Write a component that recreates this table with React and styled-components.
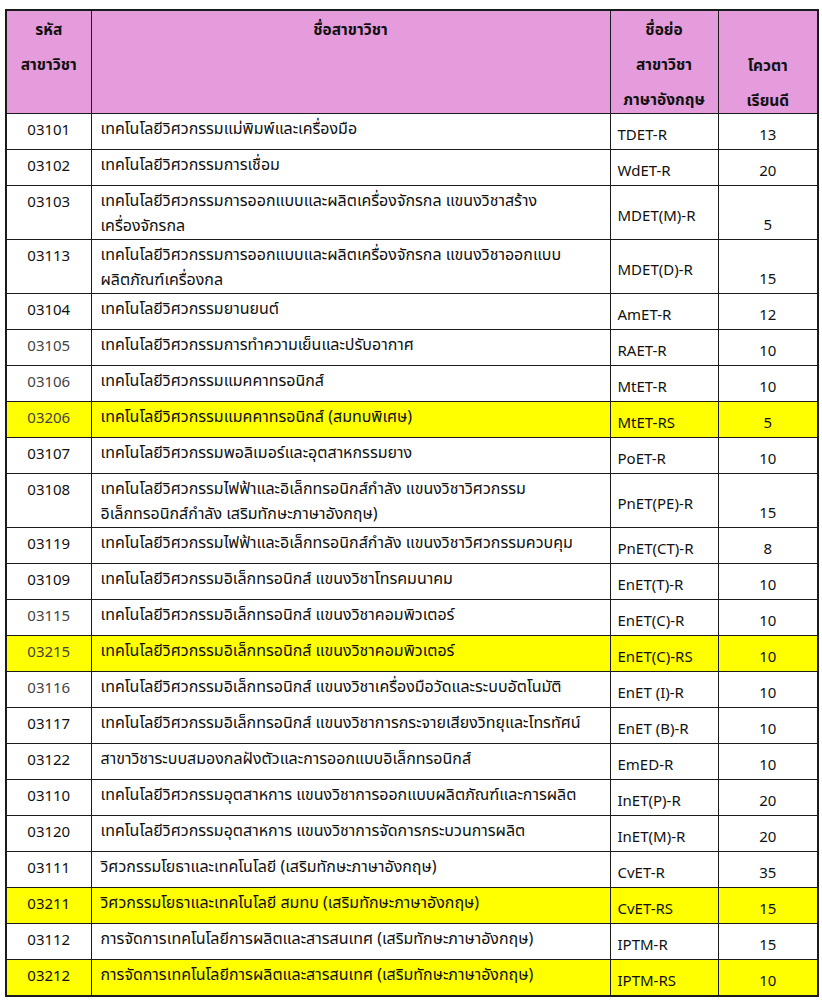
import styled, { createGlobalStyle } from 'styled-components';

const Global = createGlobalStyle`
    body {
        margin: 0;
        background: #fff;
        font-family: Tahoma, "Noto Sans Thai", "Noto Sans", "DejaVu Sans", sans-serif;
        color: #111;
    }
`

const Page = styled.div`
    padding: 9px 0 0 5px;
`

const Table = styled.table`
    border-collapse: collapse;
    table-layout: fixed;
    width: 812px;
    border: 2px solid #1b1b1b;
    font-size: 15px;
`

const Head = styled.th`
    background: #e49cdc;
    border: 1.5px solid #1b1b1b;
    font-weight: bold;
    font-size: 15.5px;
    line-height: 35px;
    padding: 2px 0 0;
    vertical-align: top;
    text-align: center;
    color: #111;
`

const HeadText = styled.div`
    box-sizing: border-box;
    height: 100px;
    display: flex;
    flex-direction: column;
    padding-top: ${p => (p.$low ? '36px' : '0')};
    overflow: visible;
`

const Row = styled.tr`
    height: ${p => (p.$tall ? '54px' : '36px')};
    background: ${p => (p.$hl ? '#ffff00' : '#fff')};
`

const Cell = styled.td`
    border: 1.5px solid #1b1b1b;
    line-height: 25px;
    padding: 4px 8px 0 9px;
    vertical-align: top;
    white-space: nowrap;
    overflow: visible;
`

const Name = styled(Cell)`
    font-size: 16px;
    padding-top: 3px;
`

const Code = styled(Cell)`
    text-align: center;
    padding: 4px 0 0;
    color: ${p => (p.$dim ? '#444' : '#111')};
`

const Abbr = styled(Cell)`
    vertical-align: middle;
    padding: 8px 4px 0 7px;
`

const Quota = styled(Cell)`
    vertical-align: bottom;
    text-align: center;
    padding: 0 0 1px;
`

const rows = [
    ['03101', ['เทคโนโลยีวิศวกรรมแม่พิมพ์และเครื่องมือ'], 'TDET-R', 13],
    ['03102', ['เทคโนโลยีวิศวกรรมการเชื่อม'], 'WdET-R', 20],
    ['03103', ['เทคโนโลยีวิศวกรรมการออกแบบและผลิตเครื่องจักรกล แขนงวิชาสร้าง', 'เครื่องจักรกล'], 'MDET(M)-R', 5],
    ['03113', ['เทคโนโลยีวิศวกรรมการออกแบบและผลิตเครื่องจักรกล แขนงวิชาออกแบบ', 'ผลิตภัณฑ์เครื่องกล'], 'MDET(D)-R', 15],
    ['03104', ['เทคโนโลยีวิศวกรรมยานยนต์'], 'AmET-R', 12],
    ['03105', ['เทคโนโลยีวิศวกรรมการทำความเย็นและปรับอากาศ'], 'RAET-R', 10, false, true],
    ['03106', ['เทคโนโลยีวิศวกรรมแมคคาทรอนิกส์'], 'MtET-R', 10, false, true],
    ['03206', ['เทคโนโลยีวิศวกรรมแมคคาทรอนิกส์ (สมทบพิเศษ)'], 'MtET-RS', 5, true, true],
    ['03107', ['เทคโนโลยีวิศวกรรมพอลิเมอร์และอุตสาหกรรมยาง'], 'PoET-R', 10],
    ['03108', ['เทคโนโลยีวิศวกรรมไฟฟ้าและอิเล็กทรอนิกส์กำลัง แขนงวิชาวิศวกรรม', 'อิเล็กทรอนิกส์กำลัง เสริมทักษะภาษาอังกฤษ)'], 'PnET(PE)-R', 15],
    ['03119', ['เทคโนโลยีวิศวกรรมไฟฟ้าและอิเล็กทรอนิกส์กำลัง แขนงวิชาวิศวกรรมควบคุม'], 'PnET(CT)-R', 8],
    ['03109', ['เทคโนโลยีวิศวกรรมอิเล็กทรอนิกส์ แขนงวิชาโทรคมนาคม'], 'EnET(T)-R', 10],
    ['03115', ['เทคโนโลยีวิศวกรรมอิเล็กทรอนิกส์ แขนงวิชาคอมพิวเตอร์'], 'EnET(C)-R', 10, false, true],
    ['03215', ['เทคโนโลยีวิศวกรรมอิเล็กทรอนิกส์ แขนงวิชาคอมพิวเตอร์'], 'EnET(C)-RS', 10, true, true],
    ['03116', ['เทคโนโลยีวิศวกรรมอิเล็กทรอนิกส์ แขนงวิชาเครื่องมือวัดและระบบอัตโนมัติ'], 'EnET (I)-R', 10, false, true],
    ['03117', ['เทคโนโลยีวิศวกรรมอิเล็กทรอนิกส์ แขนงวิชาการกระจายเสียงวิทยุและโทรทัศน์'], 'EnET (B)-R', 10],
    ['03122', ['สาขาวิชาระบบสมองกลฝังตัวและการออกแบบอิเล็กทรอนิกส์'], 'EmED-R', 10],
    ['03110', ['เทคโนโลยีวิศวกรรมอุตสาหการ แขนงวิชาการออกแบบผลิตภัณฑ์และการผลิต'], 'InET(P)-R', 20],
    ['03120', ['เทคโนโลยีวิศวกรรมอุตสาหการ แขนงวิชาการจัดการกระบวนการผลิต'], 'InET(M)-R', 20],
    ['03111', ['วิศวกรรมโยธาและเทคโนโลยี (เสริมทักษะภาษาอังกฤษ)'], 'CvET-R', 35],
    ['03211', ['วิศวกรรมโยธาและเทคโนโลยี สมทบ (เสริมทักษะภาษาอังกฤษ)'], 'CvET-RS', 15, true],
    ['03112', ['การจัดการเทคโนโลยีการผลิตและสารสนเทศ (เสริมทักษะภาษาอังกฤษ)'], 'IPTM-R', 15],
    ['03212', ['การจัดการเทคโนโลยีการผลิตและสารสนเทศ (เสริมทักษะภาษาอังกฤษ)'], 'IPTM-RS', 10, true],
]

const App = () => {
    return (
        <Page>
            <Global />
            <Table>
                <colgroup>
                    <col style={{ width: '85px' }} />
                    <col style={{ width: '519px' }} />
                    <col style={{ width: '108px' }} />
                    <col style={{ width: '100px' }} />
                </colgroup>
                <thead>
                    <tr>
                        <Head><HeadText><span>รหัส</span><span>สาขาวิชา</span></HeadText></Head>
                        <Head><HeadText><span>ชื่อสาขาวิชา</span></HeadText></Head>
                        <Head><HeadText><span>ชื่อย่อ</span><span>สาขาวิชา</span><span>ภาษาอังกฤษ</span></HeadText></Head>
                        <Head><HeadText $low><span>โควตา</span><span>เรียนดี</span></HeadText></Head>
                    </tr>
                </thead>
                <tbody>
                    {rows.map(([code, name, abbr, quota, hl, dim]) => (
                        <Row key={code + abbr} $tall={name.length > 1} $hl={hl}>
                            <Code $dim={dim}>{code}</Code>
                            <Name>
                                {name.map((line, i) => <div key={i}>{line}</div>)}
                            </Name>
                            <Abbr>{abbr}</Abbr>
                            <Quota>{quota}</Quota>
                        </Row>
                    ))}
                </tbody>
            </Table>
        </Page>
    );
}

export default App;
